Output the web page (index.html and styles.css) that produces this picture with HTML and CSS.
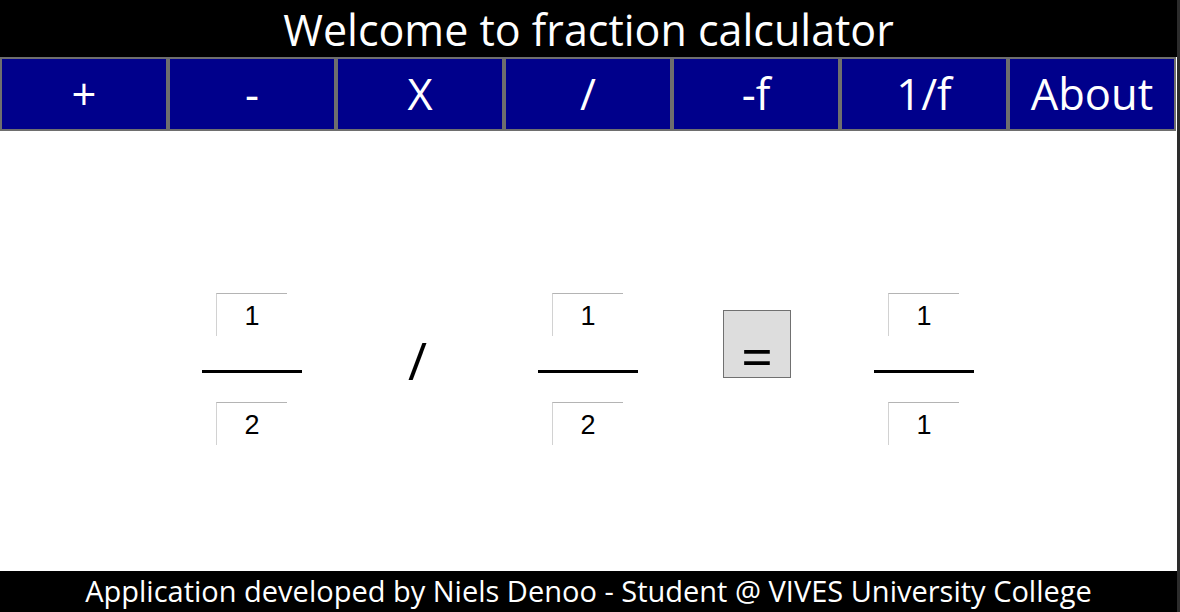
FILE: index.html
```html
<!DOCTYPE html>
<html lang="en">
<head>
<meta charset="utf-8">
<title>Fraction calculator</title>
<link rel="stylesheet" href="styles.css">
</head>
<body>
<div class="window">
  <div class="app">
    <header class="title">Welcome to fraction calculator</header>
    <nav class="menu">
      <button class="menu-btn">+</button>
      <button class="menu-btn">-</button>
      <button class="menu-btn">X</button>
      <button class="menu-btn">/</button>
      <button class="menu-btn">-f</button>
      <button class="menu-btn">1/f</button>
      <button class="menu-btn">About</button>
    </nav>
    <main class="calc">
      <div class="fraction col2">
        <input class="field" value="1">
        <div class="bar"></div>
        <input class="field" value="2">
      </div>
      <div class="op col3">/</div>
      <div class="fraction col4">
        <input class="field" value="1">
        <div class="bar"></div>
        <input class="field" value="2">
      </div>
      <button class="equals col5">=</button>
      <div class="fraction col6">
        <input class="field" value="1">
        <div class="bar"></div>
        <input class="field" value="1">
      </div>
    </main>
    <footer class="footer">Application developed by Niels Denoo - Student @ VIVES University College</footer>
  </div>
  <div class="edge"></div>
</div>
</body>
</html>
```

FILE: styles.css
```css
html, body {
  margin: 0;
  padding: 0;
  height: 100%;
  background: #ffffff;
}

.window {
  display: flex;
  height: 612px;
  width: 1180px;
  overflow: hidden;
}

.app {
  width: 1177px;
  display: flex;
  flex-direction: column;
  background: #ffffff;
  font-family: "Open Sans", "Noto Sans", sans-serif;
}

.edge {
  width: 3px;
  background: #2c2c2c;
}

.title {
  box-sizing: border-box;
  height: 57px;
  padding-top: 2px;
  flex: none;
  background: #000000;
  color: #ffffff;
  font-size: 43px;
  line-height: 55px;
  text-align: center;
  white-space: nowrap;
}

.menu {
  display: grid;
  grid-template-columns: repeat(7, 168px);
  height: 74px;
  flex: none;
}

.menu-btn {
  box-sizing: border-box;
  height: 74px;
  margin: 0;
  padding: 0;
  border: 2px solid #6e6e6e;
  background: #00008b;
  color: #ffffff;
  font-family: "Open Sans", "Noto Sans", sans-serif;
  font-size: 43.5px;
  line-height: 70px;
}

.calc {
  flex: 1;
  display: grid;
  grid-template-columns: repeat(7, 168px);
  align-items: start;
  padding-top: 162px;
  box-sizing: border-box;
}

.col2 { grid-column: 2; }
.col3 { grid-column: 3; }
.col4 { grid-column: 4; }
.col5 { grid-column: 5; }
.col6 { grid-column: 6; }

.fraction {
  justify-self: center;
  width: 100px;
  display: flex;
  flex-direction: column;
  align-items: center;
}

.field {
  box-sizing: border-box;
  width: 71px;
  height: 43px;
  margin: 0 0 0 -1px;
  padding: 3px 0 0;
  border: none;
  border-top: 1px solid #b4b4b4;
  border-left: 1px solid #d2d2d2;
  background: #ffffff;
  color: #000000;
  font-family: "Liberation Sans", Arial, sans-serif;
  font-size: 27px;
  text-align: center;
  outline: none;
}

.bar {
  width: 100px;
  height: 3px;
  background: #000000;
  margin: 34px 0 29px;
}

.op {
  justify-self: center;
  margin: 41px 0 0 -5px;
  font-size: 52px;
  line-height: 52px;
  color: #000000;
}

.equals {
  justify-self: center;
  margin: 17px 0 0 2px;
  box-sizing: border-box;
  width: 68px;
  height: 68px;
  padding: 24px 0 0;
  border: 1px solid #707070;
  background: #dddddd;
  color: #000000;
  font-family: "Open Sans", "Noto Sans", sans-serif;
  font-size: 56px;
  line-height: 40px;
  display: flex;
  align-items: flex-start;
  justify-content: center;
}

.footer {
  height: 41px;
  flex: none;
  background: #000000;
  color: #ffffff;
  font-size: 29px;
  line-height: 40px;
  text-align: center;
  overflow: hidden;
  white-space: nowrap;
}
```
